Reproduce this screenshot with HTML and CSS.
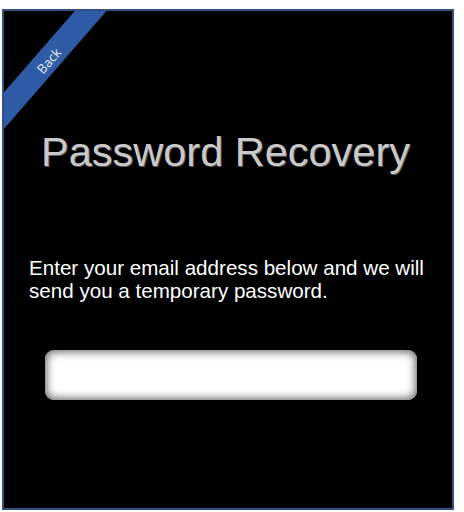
FILE: index.html
```html
<!DOCTYPE html>
<html>
<head>
<meta charset="utf-8">
<link rel="stylesheet" href="styles.css">
</head>
<body>
<div class="panel">
  <div class="ribbon"><span>Back</span></div>
  <h1 class="title">Password Recovery</h1>
  <p class="intro">Enter your email address below and we will send you a temporary password.</p>
  <input class="email" type="text">
</div>
</body>
</html>
```
FILE: styles.css
```css
html, body {
  margin: 0;
  padding: 0;
  background: #ffffff;
}
body {
  padding: 9px 0 0 2px;
}
.panel {
  position: relative;
  overflow: hidden;
  box-sizing: border-box;
  width: 452px;
  height: 501px;
  border: 2px solid #34507e;
  background: #000000;
  display: flex;
  flex-direction: column;
  align-items: flex-start;
}
.ribbon {
  position: absolute;
  left: -36px;
  top: 37px;
  width: 160px;
  height: 24px;
  background: #2f5ba6;
  transform: rotate(-49deg);
  display: flex;
  align-items: center;
  justify-content: center;
}
.ribbon span {
  font-family: "Open Sans", "DejaVu Sans", sans-serif;
  font-size: 13px;
  color: #e6ecf5;
  line-height: 1;
  padding-top: 3px;
}
.title {
  margin: 117px 0 0 0;
  padding-left: 37px;
  font-family: "Liberation Sans", Arial, sans-serif;
  font-weight: normal;
  font-size: 41.5px;
  line-height: 48px;
  color: #c9c9c9;
  text-shadow: 1px 1px 0 #5a5a5a;
}
.intro {
  margin: 80px 0 0 0;
  padding-left: 25px;
  width: 420px;
  font-family: "Liberation Sans", Arial, sans-serif;
  font-size: 20.6px;
  line-height: 23px;
  color: #ffffff;
}
.email {
  margin: 48px 0 0 41px;
  box-sizing: border-box;
  width: 372px;
  height: 50px;
  border: none;
  border-radius: 9px;
  background: #ffffff;
  box-shadow: inset 0 0 9px 2px #6a6a6a;
  outline: none;
}
```
